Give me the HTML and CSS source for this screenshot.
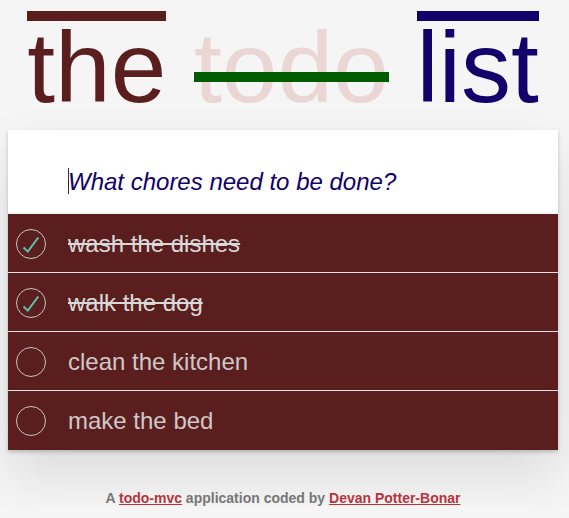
FILE: index.html
```html
<!DOCTYPE html>
<html lang="en">
<head>
<meta charset="utf-8">
<title>the todo list</title>
<link rel="stylesheet" href="styles.css">
</head>
<body>
<main class="app">
  <h1 class="title"><span class="t-the">the</span> <span class="t-todo">todo</span> <span class="t-list">list</span></h1>
  <section class="card">
    <div class="entry">
      <input class="new-todo" type="text" placeholder="What chores need to be done?">
      <span class="caret"></span>
    </div>
    <ul class="todo-list">
      <li class="item done">
        <svg class="toggle" width="30" height="30" viewBox="0 0 30 30"><circle cx="15" cy="15" r="14.5" fill="none" stroke="#c9c3c3" stroke-width="1"/><polyline points="7.5,18.5 11.8,22.6 22.3,8.5" fill="none" stroke="#5dc2af" stroke-width="2"/></svg>
        <span class="label">wash the dishes</span>
      </li>
      <li class="item done">
        <svg class="toggle" width="30" height="30" viewBox="0 0 30 30"><circle cx="15" cy="15" r="14.5" fill="none" stroke="#c9c3c3" stroke-width="1"/><polyline points="7.5,18.5 11.8,22.6 22.3,8.5" fill="none" stroke="#5dc2af" stroke-width="2"/></svg>
        <span class="label">walk the dog</span>
      </li>
      <li class="item">
        <svg class="toggle" width="30" height="30" viewBox="0 0 30 30"><circle cx="15" cy="15" r="14.5" fill="none" stroke="#c9c3c3" stroke-width="1"/></svg>
        <span class="label">clean the kitchen</span>
      </li>
      <li class="item">
        <svg class="toggle" width="30" height="30" viewBox="0 0 30 30"><circle cx="15" cy="15" r="14.5" fill="none" stroke="#c9c3c3" stroke-width="1"/></svg>
        <span class="label">make the bed</span>
      </li>
    </ul>
  </section>
  <footer class="info">A <a href="#">todo-mvc</a> application coded by <a href="#">Devan Potter-Bonar</a></footer>
</main>
</body>
</html>
```
FILE: styles.css
```css
html, body {
  margin: 0;
  padding: 0;
}
body {
  background: #f5f5f5;
  font-family: "Liberation Sans", Arial, sans-serif;
}
.app {
  width: 550px;
  margin: 0 0 0 8px;
}
.title {
  margin: 0 0 13px;
  padding-top: 17px;
  font-size: 100px;
  line-height: 100px;
  font-weight: normal;
  text-align: center;
  white-space: nowrap;
}
.t-the {
  color: #5a1e1e;
  box-shadow: inset 0 10px 0 #5a1e1e;
}
.t-todo {
  position: relative;
  color: #ebd6d6;
}
.t-todo::after {
  content: "";
  position: absolute;
  left: 0;
  right: 0;
  top: 61px;
  height: 10px;
  background: #005c00;
}
.t-list {
  color: #12006b;
  box-shadow: inset 0 10px 0 #12006b;
}
.card {
  background: #fff;
  box-shadow: 0 2px 4px rgba(0,0,0,0.2), 0 25px 50px rgba(0,0,0,0.1);
}
.entry {
  position: relative;
}
.new-todo {
  display: block;
  box-sizing: border-box;
  width: 100%;
  height: 84px;
  margin: 0;
  padding: 35px 16px 15px 60px;
  border: none;
  outline: none;
  background: #fff;
  font-family: "Liberation Sans", Arial, sans-serif;
  font-size: 24px;
  line-height: 1.4;
  color: #12006b;
  box-shadow: inset 0 -2px 1px rgba(0,0,0,0.03);
}
.new-todo::placeholder {
  font-style: italic;
  color: #12006b;
  opacity: 1;
}
.caret {
  position: absolute;
  left: 60px;
  top: 38px;
  width: 1px;
  height: 26px;
  background: #333;
}
.todo-list {
  list-style: none;
  margin: 0;
  padding: 0;
  background: #5a1e1e;
}
.item {
  display: flex;
  align-items: center;
  height: 58px;
  border-bottom: 1px solid #e8e0e0;
  padding-left: 8px;
}
.item:last-child {
  border-bottom-color: #5a1e1e;
}
.toggle {
  flex: none;
  margin-top: 2px;
}
.label {
  margin-left: 22px;
  font-size: 24px;
  line-height: 1.2;
  color: #cfc8c8;
  padding-top: 2px;
}
.done .label {
  color: #d9d9d9;
  text-decoration: line-through;
}
.info {
  margin-top: 40px;
  text-align: center;
  font-size: 14px;
  font-weight: bold;
  color: #777;
}
.info a {
  color: #b8343c;
  text-decoration: underline;
}
```
